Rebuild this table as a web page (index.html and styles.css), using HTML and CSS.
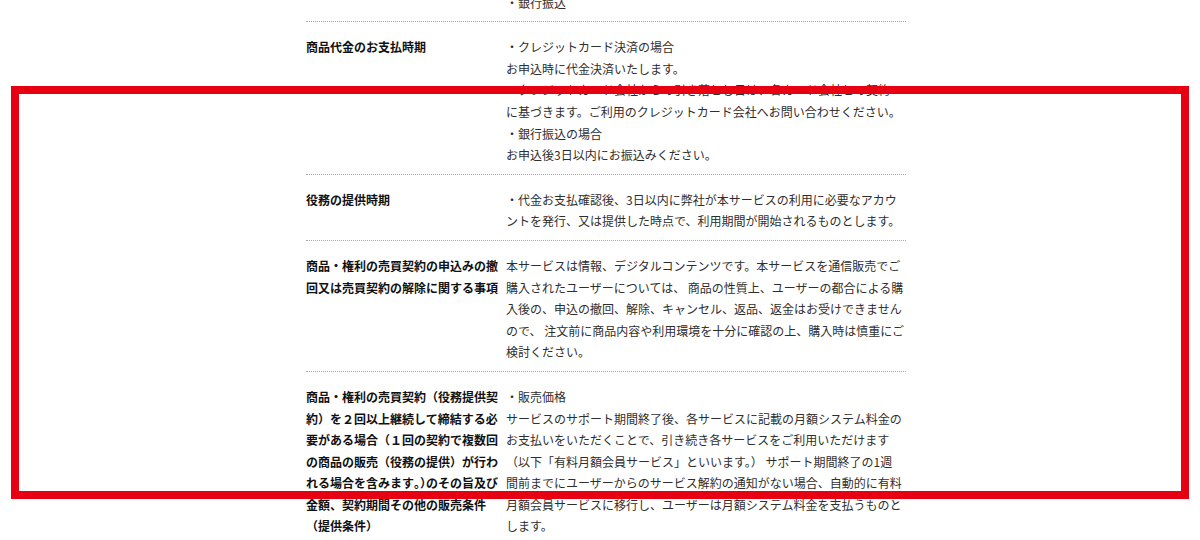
FILE: index.html
```html
<!DOCTYPE html>
<html lang="ja">
<head>
<meta charset="utf-8">
<title>特定商取引法に基づく表記</title>
<link rel="stylesheet" href="styles.css">
</head>
<body>
<div class="wrap">
  <div class="row">
    <div class="label">お支払方法</div>
    <div class="val">・クレジットカード決済<br>・銀行振込</div>
  </div>
  <div class="row">
    <div class="label">商品代金のお支払時期</div>
    <div class="val">・クレジットカード決済の場合<br>お申込時に代金決済いたします。<br>・クレジットカード会社からの引き落とし日は、各カード会社との契約<br>に基づきます。ご利用のクレジットカード会社へお問い合わせください。<br>・銀行振込の場合<br>お申込後3日以内にお振込みください。</div>
  </div>
  <div class="row">
    <div class="label">役務の提供時期</div>
    <div class="val">・代金お支払確認後、3日以内に弊社が本サービスの利用に必要なアカウ<br>ントを発行、又は提供した時点で、利用期間が開始されるものとします。</div>
  </div>
  <div class="row">
    <div class="label">商品・権利の売買契約の申込みの撤<br>回又は売買契約の解除に関する事項</div>
    <div class="val">本サービスは情報、デジタルコンテンツです。本サービスを通信販売でご<br>購入されたユーザーについては、 商品の性質上、ユーザーの都合による購<br>入後の、申込の撤回、解除、キャンセル、返品、返金はお受けできません<br>ので、 注文前に商品内容や利用環境を十分に確認の上、購入時は慎重にご<br>検討ください。</div>
  </div>
  <div class="row">
    <div class="label">商品・権利の売買契約（役務提供契<br>約）を２回以上継続して締結する必<br>要がある場合（１回の契約で複数回<br>の商品の販売（役務の提供）が行わ<br>れる場合を含みます<span class="yak">。）</span>のその旨及び<br>金額、契約期間その他の販売条件<br>（提供条件）</div>
    <div class="val">・販売価格<br>サービスのサポート期間終了後、各サービスに記載の月額システム料金の<br>お支払いをいただくことで、引き続き各サービスをご利用いただけます<br>（以下「有料月額会員サービス」といいます。） サポート期間終了の1週<br>間前までにユーザーからのサービス解約の通知がない場合、自動的に有料<br>月額会員サービスに移行し、ユーザーは月額システム料金を支払うものと<br>します。</div>
  </div>
</div>
<div class="highlight"></div>
</body>
</html>
```

FILE: styles.css
```css
html, body {
  margin: 0;
  padding: 0;
  background: #ffffff;
}

body {
  font-family: "Noto Sans CJK JP", "Noto Sans", sans-serif;
  font-size: 12px;
  line-height: 21.6px;
  color: #2e2e2e;
  overflow: hidden;
  height: 540px;
}

.wrap {
  width: 600px;
  margin: -44px 0 0 306px;
}

.row {
  display: flex;
  padding: 14px 0 8px;
  border-bottom: 1px dotted #a8a8a8;
}

.label {
  width: 200px;
  flex: 0 0 200px;
  font-weight: bold;
  color: #111111;
  white-space: nowrap;
}

.val {
  flex: 1;
  white-space: nowrap;
}

.yak {
  font-feature-settings: "halt";
}

.highlight {
  position: absolute;
  left: 11px;
  top: 86px;
  width: 1178px;
  height: 413px;
  box-sizing: border-box;
  border: 8px solid #e60012;
  pointer-events: none;
}
```
